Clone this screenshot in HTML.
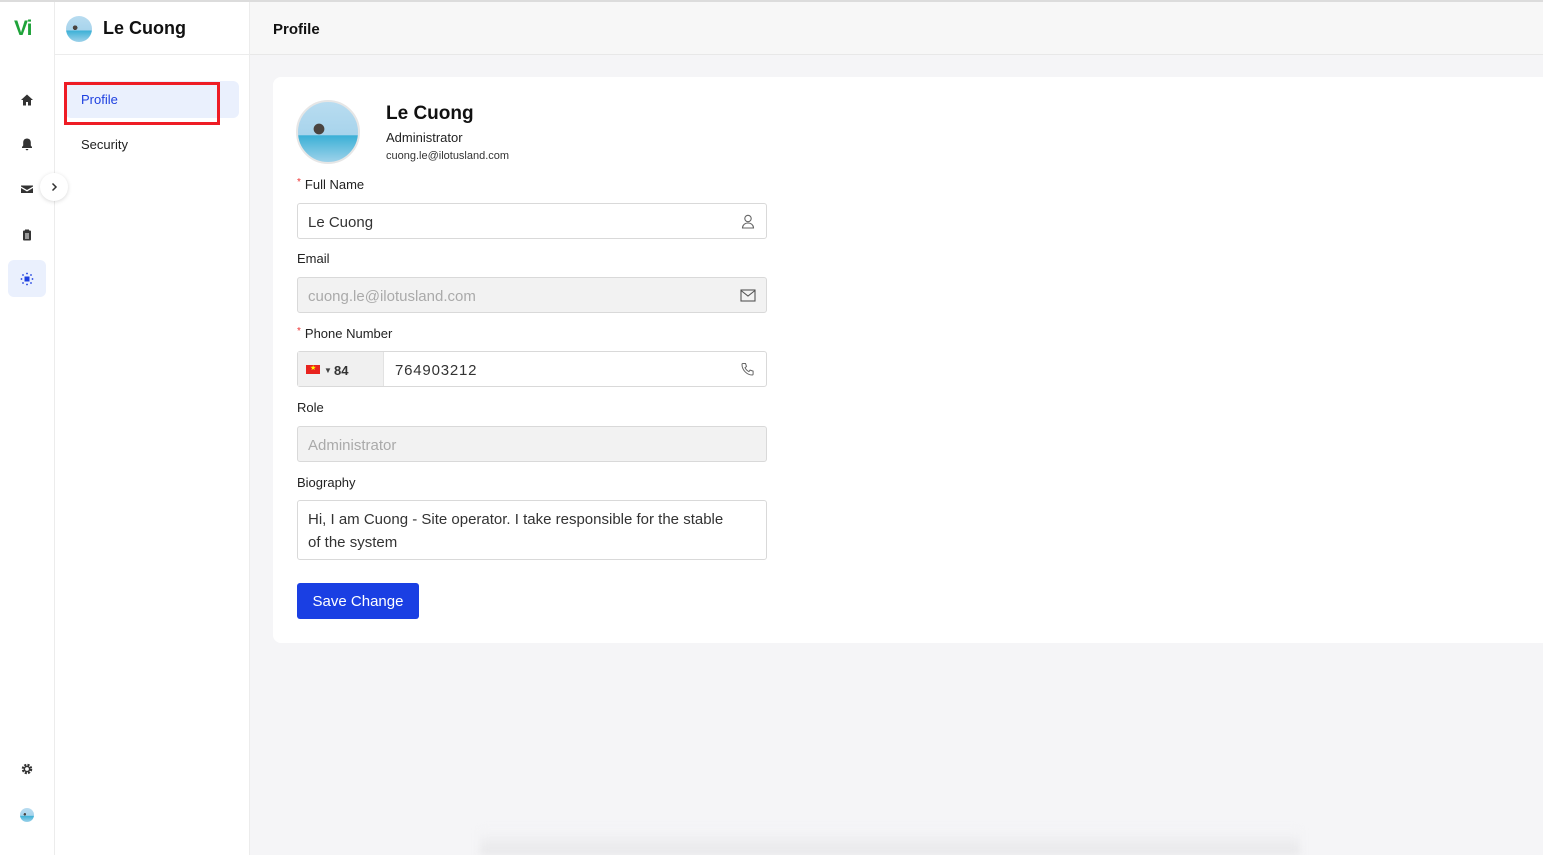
<!DOCTYPE html>
<html><head><meta charset="utf-8"><style>
*{box-sizing:border-box;margin:0;padding:0}
body{width:1543px;height:855px;overflow:hidden;font-family:"Liberation Sans",sans-serif;background:#f5f5f7;position:relative;color:#1f1f1f}
.topline{position:absolute;left:0;top:0;width:1543px;height:2px;background:#dcdcdc}
.rail{position:absolute;left:0;top:2px;width:55px;height:853px;background:#fff;border-right:1px solid #ececec}
.side{position:absolute;left:55px;top:2px;width:195px;height:853px;background:#fff;border-right:1px solid #ececec}
.header{position:absolute;left:250px;top:2px;width:1293px;height:53px;background:#f7f7f7;border-bottom:1px solid #e8e8e8}
.abs{position:absolute}
.ic{position:absolute;left:20px;width:14px;height:14px}
.card{position:absolute;left:273px;top:77px;width:1280px;height:566px;background:#fff;border-radius:8px}
.lbl{position:absolute;left:297px;font-size:13px;color:#222}
.lbl .r{color:#e33;font-size:10px;margin-right:4px;vertical-align:top}
.inp{position:absolute;left:297px;width:470px;height:36px;border:1px solid #d9d9d9;border-radius:3px;font-size:15px;padding:0 10px;line-height:37px;color:#333;background:#fff}
.dis{background:#f2f2f2;color:#aaa}
.avatar{border-radius:50%;background:radial-gradient(circle at 35% 45%,#4a4440 0 10%,transparent 11%),linear-gradient(180deg,#b8dcf0 0%,#a8d4ec 55%,#3bb0d6 56%,#9ed2ea 100%)}
</style></head><body>
<div class="topline"></div>
<div class="rail">
  <div class="abs" style="left:14px;top:15px;font-weight:bold;font-size:21px;color:#1fa33a;letter-spacing:-1px">Vi</div>
  <svg class="ic" style="top:91px" viewBox="0 0 14 14"><path d="M7 1.5 1 7h2v5.5h3v-3.5h2v3.5h3V7h2z" fill="#333"/></svg>
  <svg class="ic" style="top:135px" viewBox="0 0 14 14"><path d="M7 1.5c-2.4 0-3.8 1.8-3.8 4v3L2 10v1h10v-1l-1.2-1.5v-3c0-2.2-1.4-4-3.8-4zM5.7 12a1.3 1.3 0 0 0 2.6 0z" fill="#333"/></svg>
  <svg class="ic" style="top:180px" viewBox="0 0 14 14"><path d="M1 3.5h12v1L7 8 1 4.5zM1 6l6 3.5L13 6v5H1z" fill="#333"/></svg>
  <svg class="ic" style="top:226px" viewBox="0 0 14 14"><rect x="3" y="2.5" width="8" height="10" rx="1" fill="#333"/><rect x="5" y="1.5" width="4" height="2" fill="#333"/><path d="M5 6h4M5 8h4M5 10h4" stroke="#fff" stroke-width="1"/></svg>
  <div class="abs" style="left:8px;top:258px;width:38px;height:37px;background:#eaf0fd;border-radius:6px"></div>
  <svg class="ic" style="top:270px" viewBox="0 0 14 14"><rect x="4.5" y="4.5" width="5" height="5" fill="#1d3fe0"/><g fill="#1d3fe0"><circle cx="7" cy="1.5" r="0.9"/><circle cx="7" cy="12.5" r="0.9"/><circle cx="1.5" cy="7" r="0.9"/><circle cx="12.5" cy="7" r="0.9"/><circle cx="3" cy="3" r="0.9"/><circle cx="11" cy="3" r="0.9"/><circle cx="3" cy="11" r="0.9"/><circle cx="11" cy="11" r="0.9"/></g></svg>
  <svg class="ic" style="top:760px" viewBox="0 0 14 14"><circle cx="7" cy="7" r="4" fill="none" stroke="#333" stroke-width="2.5" stroke-dasharray="2 1.2"/><circle cx="7" cy="7" r="2.6" fill="none" stroke="#333" stroke-width="1.4"/></svg>
  <div class="abs avatar" style="left:20px;top:806px;width:14px;height:14px"></div>
</div>
<div class="abs" style="left:40px;top:173px;width:28px;height:28px;border-radius:50%;background:#fff;box-shadow:0 1px 4px rgba(0,0,0,.15);z-index:3">
  <svg style="position:absolute;left:9px;top:9px" width="10" height="10" viewBox="0 0 10 10"><path d="M3.5 1.5 7 5l-3.5 3.5" fill="none" stroke="#333" stroke-width="1.5"/></svg>
</div>
<div class="side">
  <div class="abs avatar" style="left:11px;top:14px;width:26px;height:26px"></div>
  <div class="abs" style="left:48px;top:16px;font-size:18px;font-weight:bold;color:#111">Le Cuong</div>
  <div class="abs" style="left:0;top:52px;width:195px;height:1px;background:#ececec"></div>
  <div class="abs" style="left:10px;top:79px;width:174px;height:37px;background:#eaf0fd;border-radius:6px"></div>
  <div class="abs" style="left:9px;top:80px;width:156px;height:43px;border:3px solid #ee1c25"></div>
  <div class="abs" style="left:26px;top:90px;font-size:13px;color:#1d3fe0">Profile</div>
  <div class="abs" style="left:26px;top:135px;font-size:13px;color:#222">Security</div>
</div>
<div class="header"><div class="abs" style="left:23px;top:19px;font-size:15px;font-weight:bold;color:#111">Profile</div></div>
<div class="card"></div>
<div class="abs avatar" style="left:296px;top:100px;width:64px;height:64px;border:2px solid #e6e6e6"></div>
<div class="abs" style="left:386px;top:103px;font-size:19px;font-weight:bold;color:#111">Le Cuong</div>
<div class="abs" style="left:386px;top:130px;font-size:13px;color:#222">Administrator</div>
<div class="abs" style="left:386px;top:150px;font-size:11px;color:#333">cuong.le@ilotusland.com</div>
<div class="lbl" style="top:177px"><span class="r">*</span>Full Name</div>
<div class="inp" style="top:203px">Le Cuong
  <svg style="position:absolute;right:11px;top:10px" width="14" height="15" viewBox="0 0 14 15"><circle cx="7" cy="4.5" r="3.2" fill="none" stroke="#666" stroke-width="1.1"/><path d="M1.5 14c0-3 2.5-5 5.5-5s5.5 2 5.5 5z" fill="none" stroke="#666" stroke-width="1.1"/></svg></div>
<div class="lbl" style="top:251px">Email</div>
<div class="inp dis" style="top:277px">cuong.le@ilotusland.com
  <svg style="position:absolute;right:10px;top:11px" width="16" height="13" viewBox="0 0 16 13"><rect x="1" y="1" width="14" height="11" fill="none" stroke="#555" stroke-width="1.1"/><path d="M1 1.5 8 7l7-5.5" fill="none" stroke="#555" stroke-width="1.1"/></svg></div>
<div class="lbl" style="top:326px"><span class="r">*</span>Phone Number</div>
<div class="inp" style="top:351px;padding:0">
  <div class="abs" style="left:0;top:0;width:86px;height:34px;background:#f0f0f0;border-right:1px solid #e2e2e2"></div>
  <div class="abs" style="left:8px;top:13px;width:14px;height:9px;background:#e8231e"></div>
  <div class="abs" style="left:12px;top:12px;font-size:7px;line-height:10px;color:#ff0">★</div>
  <div class="abs" style="left:26px;top:0;font-size:8px;color:#444">▼</div>
  <div class="abs" style="left:36px;top:0;font-size:13px;font-weight:bold;color:#333">84</div>
  <div class="abs" style="left:97px;top:0;font-size:15px;letter-spacing:.8px;color:#333">764903212</div>
  <svg style="position:absolute;right:11px;top:10px" width="14" height="14" viewBox="0 0 14 14"><path d="M2 1.5h2.5l1 3-1.5 1.2c.8 1.7 2.2 3.1 3.9 3.9l1.2-1.5 3 1V12c0 .6-.5 1-1 1C6 13 1 8 1 2.5c0-.5.4-1 1-1z" fill="none" stroke="#666" stroke-width="1"/></svg>
</div>
<div class="lbl" style="top:400px">Role</div>
<div class="inp dis" style="top:426px">Administrator</div>
<div class="lbl" style="top:475px">Biography</div>
<div class="inp" style="top:500px;height:60px;line-height:23px;padding:7px 10px 0 10px">Hi, I am Cuong - Site operator. I take responsible for the stable<br>of the system</div>
<div class="abs" style="left:297px;top:583px;width:122px;height:36px;background:#1a3fe3;border-radius:3px;color:#fff;font-size:15px;line-height:38px;text-align:center">Save Change</div>
<div class="abs" style="left:480px;top:830px;width:820px;height:25px;background:linear-gradient(#f5f5f7,#e6e6e8);filter:blur(4px)"></div>
</body></html>
